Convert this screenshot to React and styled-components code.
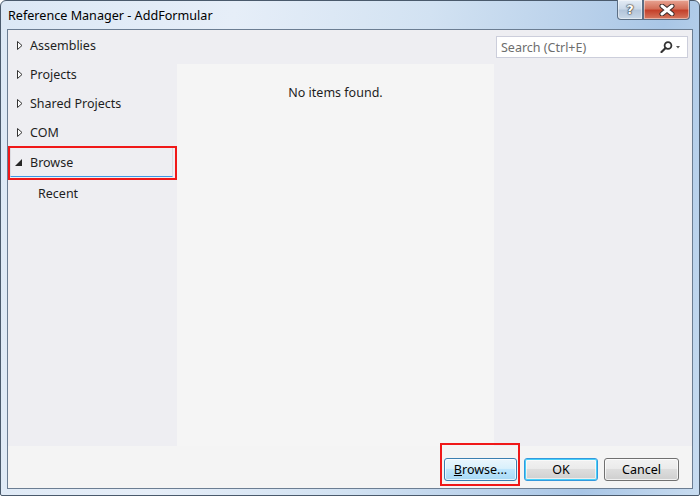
import React from "react";
import styled, { createGlobalStyle } from "styled-components";

const GlobalStyle = createGlobalStyle`
  html, body {
    margin: 0;
    padding: 0;
    width: 700px;
    height: 496px;
    overflow: hidden;
    background: #ffffff;
  }
  body {
    font-family: "Noto Sans", "Open Sans", sans-serif;
    font-size: 12px;
    color: #000;
  }
`;

const Window = styled.div`
  box-sizing: border-box;
  width: 700px;
  height: 496px;
  display: flex;
  flex-direction: column;
  border: 1px solid #4a5a6c;
  border-radius: 6px 6px 2px 2px;
  background: linear-gradient(
    100deg,
    #dce8f5 0%,
    #e6eef8 30%,
    #d2e2f2 55%,
    #b8d0ea 75%,
    #a9c6e6 85%,
    #c8dcf0 100%
  );
  padding: 0 6px 6px 6px;
`;

const TitleBar = styled.div`
  height: 28px;
  display: flex;
  align-items: flex-start;
  justify-content: space-between;
`;

const Title = styled.div`
  padding: 6px 0 0 1px;
  font-size: 12.6px;
  color: #000;
`;

const CaptionButtons = styled.div`
  display: flex;
  margin-top: -1px;
  margin-right: 3px;
`;

const CaptionButton = styled.div`
  box-sizing: border-box;
  height: 20px;
  width: ${({ wide }) => (wide ? "47px" : "26px")};
  display: flex;
  align-items: center;
  justify-content: center;
  border: 1px solid #5b6e84;
  border-top: none;
  border-radius: ${({ wide }) => (wide ? "0 0 4px 0" : "0 0 0 4px")};
  background: ${({ wide }) =>
    wide
      ? "linear-gradient(#e8a493 0%, #d3705a 45%, #c4412b 55%, #d5775e 100%)"
      : "linear-gradient(#e4ecf5 0%, #cbd9e8 45%, #b3c5da 55%, #c9d8e8 100%)"};
  box-shadow: inset 0 0 0 1px rgba(255, 255, 255, 0.45);
  color: #fff;
  font-family: "DejaVu Sans", sans-serif;
  font-weight: bold;
  font-size: 13px;
  text-shadow: 0 0 1px #333, 0 0 1px #333, 0 0 2px #222;
`;

const Client = styled.div`
  flex: 1;
  display: flex;
  flex-direction: column;
  border: 1px solid #6b7d92;
  background: #f4f4f4;
  min-height: 0;
`;

const Main = styled.div`
  flex: 1;
  display: flex;
  background: #eeeef2;
  min-height: 0;
`;

const Sidebar = styled.div`
  width: 169px;
  display: flex;
  flex-direction: column;
  padding-top: 1px;
`;

const TreeRow = styled.div`
  box-sizing: border-box;
  height: ${({ child }) => (child ? "30px" : "29px")};
  margin-top: ${({ child }) => (child ? "1px" : "0")};
  display: flex;
  align-items: center;
  padding-left: ${({ child }) => (child ? "30px" : "9px")};
  font-size: 12.5px;
  color: #1e1e1e;
  position: relative;
  ${({ selected }) =>
    selected &&
    `
    border: 1px solid #dcdce2;
    border-bottom: 1px solid #3c96e6;
    margin: 0 4px 0 2px;
    padding-left: 6px;
    height: 30px;
    &::after {
      content: "";
      position: absolute;
      left: -3px;
      top: -2px;
      right: -5px;
      bottom: -4px;
      border: 2px solid #f01818;
      pointer-events: none;
    }
  `}
`;

const Arrow = styled.span`
  width: ${({ open }) => (open ? "15px" : "13px")};
  margin-left: ${({ open }) => (open ? "-2px" : "0")};
  height: 10px;
  display: flex;
  align-items: center;
  justify-content: flex-start;
`;

const Content = styled.div`
  flex: 1;
  display: flex;
  flex-direction: column;
`;

const SearchBar = styled.div`
  height: 34px;
  display: flex;
  justify-content: flex-end;
  align-items: flex-start;
  padding: 6px 4px 0 0;
  box-sizing: border-box;
`;

const SearchBox = styled.div`
  box-sizing: border-box;
  width: 192px;
  height: 22px;
  background: #fff;
  border: 1px solid #cccedb;
  display: flex;
  align-items: center;
  padding: 0 5px 0 4px;
`;

const SearchText = styled.span`
  flex: 1;
  color: #6d6d6d;
  font-size: 12.5px;
`;

const Body = styled.div`
  flex: 1;
  display: flex;
`;

const ItemList = styled.div`
  width: 317px;
  background: #f5f5f5;
  display: flex;
  justify-content: center;
  padding-top: 20px;
  box-sizing: border-box;
  font-size: 12.5px;
  color: #1e1e1e;
`;

const Details = styled.div`
  flex: 1;
`;

const Footer = styled.div`
  height: 42px;
  box-sizing: border-box;
  display: flex;
  justify-content: flex-end;
  align-items: flex-start;
  gap: 6px;
  padding: 12px 13px 0 0;
  background: #f4f4f4;
`;

const Button = styled.button`
  box-sizing: border-box;
  width: ${({ w }) => w}px;
  height: 23px;
  font-family: "Noto Sans", "Open Sans", sans-serif;
  font-size: 12.5px;
  color: #000;
  border-radius: 3px;
  padding: 0;
  border: 1px solid
    ${({ variant }) =>
      variant === "hot" ? "#3c7fb1" : variant === "default" ? "#3399dd" : "#707070"};
  background: ${({ variant }) =>
    variant === "hot"
      ? "linear-gradient(#eaf6fd 0%, #d9f0fc 45%, #bee6fd 50%, #a7d9f5 100%)"
      : "linear-gradient(#f2f2f2 0%, #ebebeb 45%, #dddddd 50%, #cfcfcf 100%)"};
  box-shadow: ${({ variant }) =>
    variant === "default"
      ? "inset 0 0 0 1px #48d0f8, inset 0 0 0 2px rgba(255,255,255,0.6)"
      : "inset 0 0 0 1px rgba(255,255,255,0.7)"};
`;

const Marked = styled.span`
  position: relative;
  display: flex;
  margin-right: 1px;
  &::after {
    content: "";
    position: absolute;
    left: -4px;
    right: -3px;
    top: -15px;
    bottom: -5px;
    border: 2px solid #f01818;
    pointer-events: none;
  }
`;

const RightArrow = () => (
  <svg width="6" height="9" viewBox="0 0 6 9">
    <path d="M0.5 0.5 L5 4.5 L0.5 8.5 Z" fill="#fff" stroke="#333" strokeWidth="1" />
  </svg>
);

const DownArrow = () => (
  <svg width="7" height="7" viewBox="0 0 7 7">
    <path d="M7 0 L7 7 L0 7 Z" fill="#262626" />
  </svg>
);

const CloseGlyph = () => (
  <svg width="16" height="12" viewBox="0 0 16 12">
    <path d="M3 2 L13 10 M13 2 L3 10" stroke="#3a2a28" strokeWidth="5" strokeLinecap="round" />
    <path d="M3 2 L13 10 M13 2 L3 10" stroke="#ffffff" strokeWidth="3" strokeLinecap="round" />
  </svg>
);

const SearchIcon = () => (
  <svg width="22" height="12" viewBox="0 0 22 12">
    <circle cx="8" cy="4.5" r="3.4" fill="none" stroke="#333" strokeWidth="1.8" />
    <path d="M5.6 7 L1.5 11" stroke="#333" strokeWidth="2.2" strokeLinecap="round" />
    <path d="M16 5 L20 5 L18 7.5 Z" fill="#555" />
  </svg>
);

const treeItems = ["Assemblies", "Projects", "Shared Projects", "COM"];

export default function App() {
  return (
    <>
      <GlobalStyle />
      <Window>
        <TitleBar>
          <Title>Reference Manager - AddFormular</Title>
          <CaptionButtons>
            <CaptionButton>?</CaptionButton>
            <CaptionButton wide>
              <CloseGlyph />
            </CaptionButton>
          </CaptionButtons>
        </TitleBar>
        <Client>
          <Main>
            <Sidebar>
              {treeItems.map(name => (
                <TreeRow key={name}>
                  <Arrow>
                    <RightArrow />
                  </Arrow>
                  {name}
                </TreeRow>
              ))}
              <TreeRow selected>
                <Arrow open>
                  <DownArrow />
                </Arrow>
                Browse
              </TreeRow>
              <TreeRow child>Recent</TreeRow>
            </Sidebar>
            <Content>
              <SearchBar>
                <SearchBox>
                  <SearchText>Search (Ctrl+E)</SearchText>
                  <SearchIcon />
                </SearchBox>
              </SearchBar>
              <Body>
                <ItemList>No items found.</ItemList>
                <Details />
              </Body>
            </Content>
          </Main>
          <Footer>
            <Marked>
              <Button w={73} variant="hot">
                <u>B</u>rowse...
              </Button>
            </Marked>
            <Button w={74} variant="default">
              OK
            </Button>
            <Button w={75}>Cancel</Button>
          </Footer>
        </Client>
      </Window>
    </>
  );
}
